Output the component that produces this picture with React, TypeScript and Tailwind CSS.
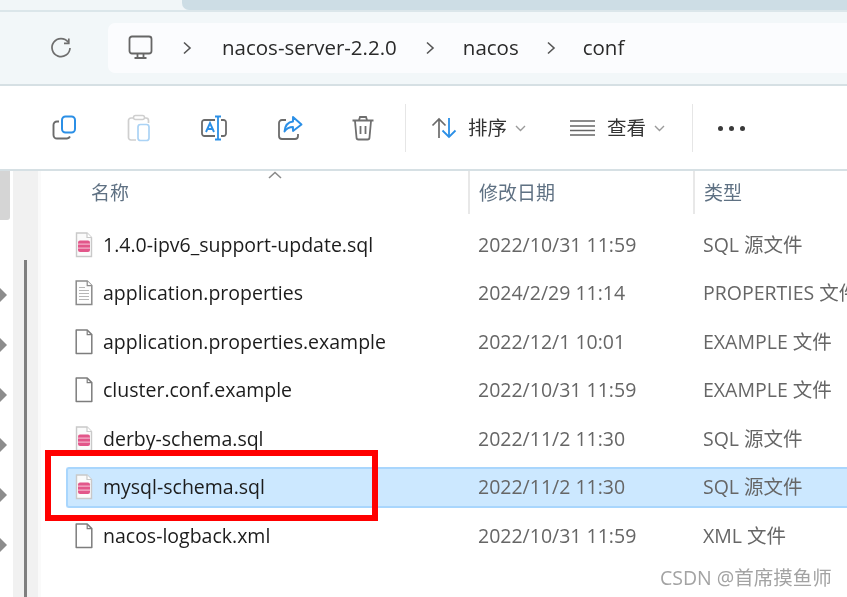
const font = "font-['Open_Sans','Noto_Sans_CJK_SC',sans-serif]";

function SqlIcon() {
  return (
    <svg width="18" height="26" viewBox="0 0 18 26" className="shrink-0">
      <path d="M1.500 1h10.500l4.500 4.500V24.500H1.500Z" fill="#fbfbfb" stroke="#c9c9c9" strokeWidth="1.400" />
      <path d="M12 1v4.500h4.500" fill="#fff" stroke="#c9c9c9" strokeWidth="1.200" />
      <rect x="3" y="8.500" width="12" height="11.500" rx="2" fill="#e2578a" />
      <path d="M3 12.200h12M3 16.200h12" stroke="#f3b2ca" strokeWidth="1.200" />
    </svg>
  );
}
function TextIcon() {
  return (
    <svg width="18" height="26" viewBox="0 0 18 26" className="shrink-0">
      <path d="M1.200 1h11l4.600 4.600V24.600H1.200Z" fill="#fdfdfd" stroke="#8a8a8a" strokeWidth="1.500" />
      <path d="M12.200 1v4.600h4.600" fill="#fff" stroke="#8a8a8a" strokeWidth="1.200" />
      <path d="M4 7.500h6M4 10.500h10M4 13.500h10M4 16.500h10M4 19.500h10" stroke="#b5b5b5" strokeWidth="1.200" />
    </svg>
  );
}
function BlankIcon() {
  return (
    <svg width="18" height="26" viewBox="0 0 18 26" className="shrink-0">
      <path d="M1.200 1h11l4.600 4.600V24.600H1.200Z" fill="#fff" stroke="#7d7d7d" strokeWidth="1.500" strokeLinejoin="round" />
      <path d="M12.200 1v4.600h4.600" fill="none" stroke="#7d7d7d" strokeWidth="1.200" />
    </svg>
  );
}

const rows = [
  { n: "1.4.0-ipv6_support-update.sql", d: "2022/10/31 11:59", t: "SQL 源文件", i: "sql" },
  { n: "application.properties", d: "2024/2/29 11:14", t: "PROPERTIES 文件", i: "text" },
  { n: "application.properties.example", d: "2022/12/1 10:01", t: "EXAMPLE 文件", i: "blank" },
  { n: "cluster.conf.example", d: "2022/10/31 11:59", t: "EXAMPLE 文件", i: "blank" },
  { n: "derby-schema.sql", d: "2022/11/2 11:30", t: "SQL 源文件", i: "sql" },
  { n: "mysql-schema.sql", d: "2022/11/2 11:30", t: "SQL 源文件", i: "sql", sel: true },
  { n: "nacos-logback.xml", d: "2022/10/31 11:59", t: "XML 文件", i: "blank" },
];

function Chevron() {
  return (
    <svg width="10" height="16" viewBox="0 0 10 16" className="shrink-0">
      <path d="M2 2.500 8 8l-6 5.500" fill="none" stroke="#555" strokeWidth="1.600" />
    </svg>
  );
}
function Down() {
  return (
    <svg width="11" height="7" viewBox="0 0 11 7" className="shrink-0">
      <path d="M1 1l4.500 4.500L10 1" fill="none" stroke="#9a9a9a" strokeWidth="1.400" />
    </svg>
  );
}

export default function App() {
  return (
    <div className={`relative w-[847px] h-[597px] overflow-hidden bg-white flex flex-col blur-[0.5px] ${font}`}>
      {/* tab strip */}
      <div className="h-[12px] shrink-0 bg-[#f1f6f8] border-b-2 border-[#dbe6ea] pl-[182px]">
        <div className="h-[10px] bg-[#cddde5] rounded-bl-[7px]" />
      </div>
      {/* address band */}
      <div className="h-[74px] shrink-0 bg-[#f2f7f9] border-b-2 border-[#d6e0e4] flex items-center pl-[50px] pb-[1px]">
        <svg width="22" height="22" viewBox="0 0 22 22" className="shrink-0">
          <path d="M18.200 5.200A9 9 0 1 0 20 11" fill="none" stroke="#6e6e6e" strokeWidth="1.700" />
          <path d="M18.800 1.500v4.800h-4.800" fill="none" stroke="#6e6e6e" strokeWidth="1.700" />
        </svg>
        <div className="ml-[36px] flex-1 h-[50px] bg-[#fbfcfe] rounded-l-[7px] flex items-center text-[20.500px] leading-none text-[#2a2a2a]">
          <svg width="26" height="26" viewBox="0 0 26 26" className="ml-[20px] shrink-0">
            <rect x="1.500" y="1.500" width="22" height="17" rx="2.500" fill="none" stroke="#666" strokeWidth="1.800" />
            <path d="M9.500 19v3M15.500 19v3M6.500 23h12" stroke="#666" strokeWidth="1.800" fill="none" />
          </svg>
          <div className="ml-[28px]"><Chevron /></div>
          <span className="ml-[30px]">nacos-server-2.2.0</span>
          <div className="ml-[28px]"><Chevron /></div>
          <span className="ml-[28px]">nacos</span>
          <div className="ml-[27px]"><Chevron /></div>
          <span className="ml-[27px]">conf</span>
        </div>
      </div>
      {/* toolbar */}
      <div className="h-[85px] shrink-0 bg-white border-b-2 border-[#d6e0e4] flex items-center pl-[52px] pt-[1px]">
        <svg width="26" height="26" viewBox="0 0 26 26" className="shrink-0">
          <path d="M7 6.500H5a3.500 3.500 0 0 0-3.500 3.500v10A3.500 3.500 0 0 0 5 23.500h10a3.500 3.500 0 0 0 3-2" fill="none" stroke="#6b6b6b" strokeWidth="1.900" />
          <rect x="10" y="1.500" width="13" height="16" rx="3.500" fill="none" stroke="#2b8fe6" strokeWidth="2" />
        </svg>
        <svg width="26" height="28" viewBox="0 0 26 28" className="ml-[48px] shrink-0">
          <path d="M7 4H5A2.500 2.500 0 0 0 2.500 6.500v17A2.500 2.500 0 0 0 5 26h5M18 4h2a2.500 2.500 0 0 1 2.500 2.500V9" fill="none" stroke="#cfcfcf" strokeWidth="1.700" />
          <rect x="7.500" y="1.500" width="11" height="4" rx="2" fill="none" stroke="#cfcfcf" strokeWidth="1.500" />
          <rect x="12" y="10.500" width="11" height="16" rx="2.500" fill="none" stroke="#abd3f5" strokeWidth="1.700" />
        </svg>
        <svg width="28" height="26" viewBox="0 0 28 26" className="ml-[48px] shrink-0">
          <path d="M15 5H4.500A2.500 2.500 0 0 0 2 7.500v11A2.500 2.500 0 0 0 4.500 21H15M21 5h2.500A2.500 2.500 0 0 1 26 7.500v11a2.500 2.500 0 0 1-2.500 2.500H21" fill="none" stroke="#6b6b6b" strokeWidth="1.800" />
          <path d="M15 1.500h6M18 1.500v23M15 24.500h6" fill="none" stroke="#2b8fe6" strokeWidth="1.800" />
          <path d="M6 17 10 8l4 9M7.300 14h5.400" fill="none" stroke="#2b8fe6" strokeWidth="1.900" />
        </svg>
        <svg width="26" height="26" viewBox="0 0 26 26" className="ml-[49px] shrink-0">
          <path d="M9 5H5a3 3 0 0 0-3 3v13a3 3 0 0 0 3 3h13a3 3 0 0 0 3-3v-2" fill="none" stroke="#6b6b6b" strokeWidth="1.800" />
          <path d="M16 2l8.500 7.500L16 16v-4c-4 0-6.500 1.500-8.500 4.500C8 11 11 7 16 6.500Z" fill="none" stroke="#2b8fe6" strokeWidth="1.900" strokeLinejoin="round" />
        </svg>
        <svg width="24" height="26" viewBox="0 0 24 26" className="ml-[48px] shrink-0">
          <path d="M1.500 5.500h21M8 5l1-3h6l1 3M4 6l1.500 16.500A2 2 0 0 0 7.500 24.500h9a2 2 0 0 0 2-2L20 6M9.500 11v8M14.500 11v8" fill="none" stroke="#6f6f6f" strokeWidth="1.800" />
        </svg>
        <div className="ml-[30px] w-px h-[48px] bg-[#e6e6e6]" />
        <svg width="26" height="24" viewBox="0 0 26 24" className="ml-[25px] shrink-0">
          <path d="M8 22V3M1.500 9.500 8 3l6.500 6.500" fill="none" stroke="#6b6b6b" strokeWidth="1.700" />
          <path d="M18 2v19M11.500 14.500 18 21l6.500-6.500" fill="none" stroke="#2b8fe6" strokeWidth="1.800" />
        </svg>
        <span className="ml-[11px] text-[19.500px] leading-none text-[#333]">排序</span>
        <div className="ml-[8px]"><Down /></div>
        <svg width="26" height="18" viewBox="0 0 26 18" className="ml-[44px] shrink-0">
          <path d="M0 2h25M0 7h25M0 11.500h25M0 16h25" stroke="#666" strokeWidth="1.600" />
        </svg>
        <span className="ml-[11px] text-[19.500px] leading-none text-[#333]">查看</span>
        <div className="ml-[8px]"><Down /></div>
        <div className="ml-[27px] w-px h-[48px] bg-[#e6e6e6]" />
        <div className="ml-[25px] flex gap-[6px]">
          <div className="w-[5px] h-[5px] rounded-full bg-[#3a3a3a]" />
          <div className="w-[5px] h-[5px] rounded-full bg-[#3a3a3a]" />
          <div className="w-[5px] h-[5px] rounded-full bg-[#3a3a3a]" />
        </div>
      </div>
      {/* body */}
      <div className="flex-1 min-h-0 flex">
        {/* navigation edge */}
        <div className="relative w-[41px] shrink-0 flex border-r-[3px] border-[#fafafa]">
          <div className="w-[13px] shrink-0 flex flex-col">
            <div className="w-[10px] h-[49px] shrink-0 bg-[#d5d5d5] rounded-br-[3px]" />
            <div className="flex flex-col gap-[36px] mt-[68px]">
              {[0, 1, 2, 3, 4, 5].map((k) => (
                <div key={k} className="w-0 h-0 border-y-[7px] border-y-transparent border-l-[7px] border-l-[#8c8c8c]" />
              ))}
            </div>
          </div>
          <div className="flex-1 bg-[#f1f1f1] pl-[11px] pt-[89px]">
            <div className="w-[2.500px] h-full bg-[#7f7f7f]" />
          </div>
        </div>
        {/* file list */}
        <div className="flex-1 min-w-0 flex flex-col relative">
          <div className="h-[53px] shrink-0 flex text-[19px] leading-none text-[#5f7183] pl-[50px]">
            <div className="w-[377px] pt-[13px]">名称</div>
            <div className="w-[225px] h-[43px] border-l-2 border-[#e8e8e8] pl-[9px] pt-[13px]">修改日期</div>
            <div className="flex-1 h-[43px] border-l-2 border-[#e8e8e8] pl-[9px] pt-[13px]">类型</div>
          </div>
          <svg width="14" height="8" viewBox="0 0 14 8" className="absolute left-[227px] top-[0px]">
            <path d="M1 7l6-5.500L13 7" fill="none" stroke="#8a8a8a" strokeWidth="1.600" />
          </svg>
          <div className="flex flex-col gap-[7.500px] pl-[25px] whitespace-nowrap">
            {rows.map((r) => (
              <div
                key={r.n}
                className={`h-[41px] shrink-0 flex items-center text-[19.500px] leading-none overflow-hidden ${
                  r.sel ? "bg-[#cce8ff] border-y-2 border-l-2 border-[#a9d6fd] rounded-l-[3px] pl-[7px]" : "pl-[9px]"
                }`}
              >
                <div className="w-[403px] shrink-0 flex items-center gap-[10px] text-[#1c1c1c]">
                  {r.i === "sql" ? <SqlIcon /> : r.i === "text" ? <TextIcon /> : <BlankIcon />}
                  <span>{r.n}</span>
                </div>
                <div className="w-[225px] shrink-0 text-[#666]">{r.d}</div>
                <div className="shrink-0 text-[#666]">{r.t}</div>
              </div>
            ))}
          </div>
        </div>
      </div>
      {/* annotation */}
      <div className="absolute left-[45px] top-[450px] w-[333px] h-[71px] border-[6px] border-[#ff0000]" />
      <div className="absolute left-[660px] top-[568px] text-[19.500px] leading-[20px] text-[#a3a3a3] whitespace-nowrap">CSDN @首席摸鱼师</div>
    </div>
  );
}
